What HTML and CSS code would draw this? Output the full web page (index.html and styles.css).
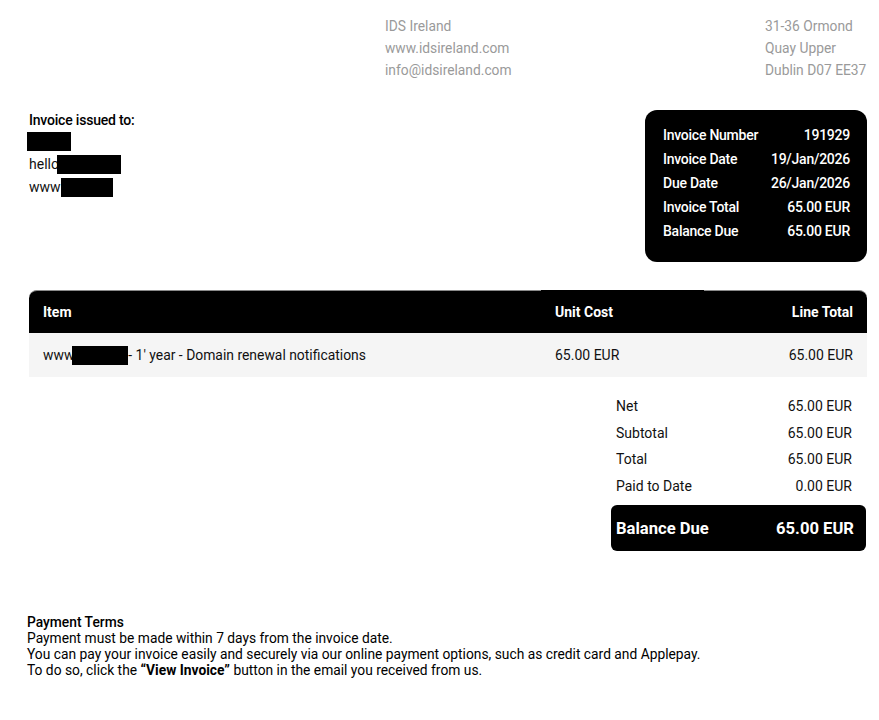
FILE: index.html
```html
<!DOCTYPE html>
<html>
<head>
<meta charset="utf-8">
<link rel="stylesheet" href="styles.css">
</head>
<body>
<div class="page">
  <header class="company">
    <div class="company-col company-main">
      <div>IDS Ireland</div>
      <div>www.idsireland.com</div>
      <div>info@idsireland.com</div>
    </div>
    <div class="company-col">
      <div>31-36 Ormond</div>
      <div>Quay Upper</div>
      <div>Dublin D07 EE37</div>
    </div>
  </header>

  <section class="details">
    <div class="client">
      <div class="client-title">Invoice issued to:</div>
      <div class="client-line"><span class="redact r1"></span></div>
      <div class="client-line">hello<span class="redact r2"></span></div>
      <div class="client-line">www<span class="redact r3"></span></div>
    </div>
    <div class="meta">
      <div class="meta-row"><span>Invoice Number</span><span>191929</span></div>
      <div class="meta-row"><span>Invoice Date</span><span>19/Jan/2026</span></div>
      <div class="meta-row"><span>Due Date</span><span>26/Jan/2026</span></div>
      <div class="meta-row"><span>Invoice Total</span><span>65.00 EUR</span></div>
      <div class="meta-row"><span>Balance Due</span><span>65.00 EUR</span></div>
    </div>
  </section>

  <section class="items">
    <div class="th th-item">Item</div>
    <div class="th th-unit">Unit Cost</div>
    <div class="th th-total">Line Total</div>
    <div class="td td-item">www<span class="redact r4"></span>- 1′ year - Domain renewal notifications</div>
    <div class="td td-unit">65.00 EUR</div>
    <div class="td td-total">65.00 EUR</div>
  </section>

  <section class="totals">
    <div class="tot-row"><span>Net</span><span>65.00 EUR</span></div>
    <div class="tot-row"><span>Subtotal</span><span>65.00 EUR</span></div>
    <div class="tot-row"><span>Total</span><span>65.00 EUR</span></div>
    <div class="tot-row"><span>Paid to Date</span><span>0.00 EUR</span></div>
    <div class="balance"><span>Balance Due</span><span>65.00 EUR</span></div>
  </section>

  <section class="terms">
    <div class="terms-title">Payment Terms</div>
    <div>Payment must be made within 7 days from the invoice date.</div>
    <div>You can pay your invoice easily and securely via our online payment options, such as credit card and Applepay.</div>
    <div>To do so, click the <b>“View Invoice”</b> button in the email you received from us.</div>
  </section>
</div>
</body>
</html>
```

FILE: styles.css
```css
* { box-sizing: border-box; }
html, body { margin: 0; padding: 0; background: #fff; }
body {
  font-family: Roboto, "Liberation Sans", sans-serif;
  font-size: 14px;
  color: #111;
}
.page {
  padding: 15px 12px 0 29px;
}
.company {
  display: flex;
  padding-left: 356px;
  color: #9a9a9a;
  line-height: 22px;
  font-size: 13.8px;
  white-space: nowrap;
}
.company-main { width: 380px; }

.details {
  display: flex;
  justify-content: space-between;
  align-items: flex-start;
  margin-top: 29px;
}
.client-title {
  font-weight: 500;
  line-height: 20px;
  color: #000;
  letter-spacing: -0.2px;
}
.client-line {
  height: 23px;
  line-height: 23px;
  display: flex;
  align-items: center;
}
.redact {
  display: inline-block;
  background: #000;
  height: 19px;
}
.r1 { width: 44px; margin-left: -2px; }
.r2 { width: 64px; margin-left: -2px; }
.r3 { width: 52px; margin-left: 0; }
.r4 { width: 56px; height: 19px; vertical-align: middle; margin-left: -2px; }

.meta {
  width: 222px;
  height: 152px;
  background: #000;
  color: #fff;
  border-radius: 12px;
  padding: 13px 17px 0 18px;
  font-weight: 500;
  font-size: 14px;
  letter-spacing: -0.25px;
}
.meta-row {
  display: flex;
  justify-content: space-between;
  line-height: 24px;
}

.items {
  margin-top: 28px;
  display: grid;
  grid-template-columns: 512px 163px 163px;
}
.th {
  background: #000;
  color: #fff;
  font-weight: 700;
  height: 43px;
  display: flex;
  align-items: center;
  padding: 0 14px;
  border-top: 1px solid #8a8a8a;
}
.th-item { border-top-left-radius: 8px; }
.th-unit { border-top-color: #000; }
.th-total { justify-content: flex-end; border-top-right-radius: 8px; }
.td {
  background: #f5f5f5;
  height: 44px;
  display: flex;
  align-items: center;
  padding: 0 14px;
}
.td-item { font-size: 13.9px; }
.td-total { justify-content: flex-end; }

.totals {
  margin-left: 582px;
  width: 255px;
  margin-top: 16px;
}
.tot-row {
  display: flex;
  justify-content: space-between;
  line-height: 26.5px;
  padding: 0 14px 0 5px;
}
.balance {
  margin-top: 6px;
  height: 46px;
  background: #000;
  color: #fff;
  border-radius: 6px;
  display: flex;
  justify-content: space-between;
  align-items: center;
  padding: 0 12px 0 5px;
  font-size: 16.6px;
  font-weight: 700;
}

.terms {
  margin-top: 63px;
  margin-left: -2px;
  color: #000;
  font-size: 13.8px;
}
.terms-title { font-weight: 500; }
.terms b { font-weight: 700; }
```
